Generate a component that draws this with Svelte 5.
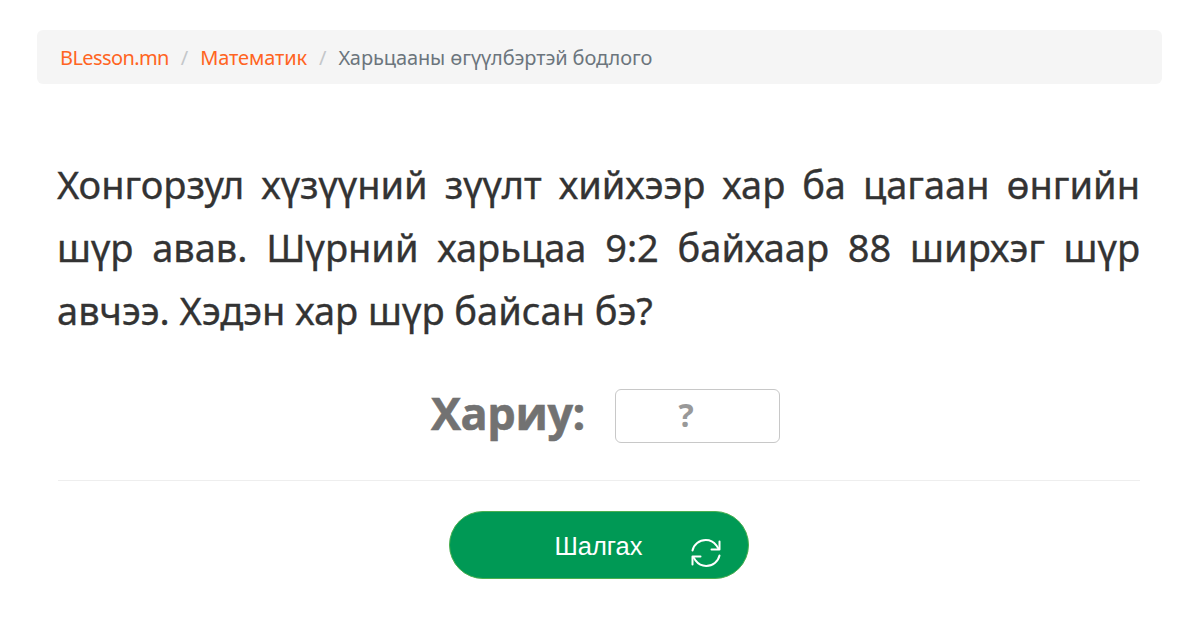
<script>
  let crumbs = [
    { label: "BLesson.mn", link: true, home: true },
    { label: "Математик", link: true },
    { label: "Харьцааны өгүүлбэртэй бодлого", link: false }
  ];
  let answer = "";
</script>

<div class="page">
  <nav class="breadcrumb">
    {#each crumbs as crumb, i}
      {#if i > 0}<span class="sep">/</span>{/if}
      <span class:link={crumb.link} class:home={crumb.home}>{crumb.label}</span>
    {/each}
  </nav>

  <div class="problem">
    <p class="question">
      Хонгорзул хүзүүний зүүлт хийхээр хар ба цагаан өнгийн шүр авав. Шүрний харьцаа 9:2 байхаар 88 ширхэг шүр авчээ. Хэдэн хар шүр байсан бэ?
    </p>

    <div class="answer">
      <span class="answer-label">Хариу:</span>
      <input class="answer-input" placeholder="?" bind:value={answer} />
    </div>

    <hr />

    <div class="actions">
      <button class="check">
        <span class="check-label">Шалгах</span>
        <svg class="refresh" width="32" height="32" viewBox="0 0 32 32" fill="none" stroke="#fff" stroke-width="2" stroke-linecap="round" stroke-linejoin="round">
          <path d="M2.500 13.500C3.800 7.500 9.200 3 15.800 3c4.300 0 8 1.900 10.500 5.300l2.400 3.700" />
          <path d="M29.500 4.500v8h-8" />
          <path d="M29.500 18.500c-1.300 6-6.700 10.500-13.300 10.500-4.300 0-8-1.900-10.500-5.300L3.300 20" />
          <path d="M2.500 27.500v-8h8" />
        </svg>
      </button>
    </div>
  </div>
</div>

<style>
  :global(body) {
    background: #fff;
  }
  .page {
    width: 1125px;
    margin: 0 0 0 37px;
    padding-top: 30px;
    font-family: "Noto Sans", "Open Sans", sans-serif;
  }
  .breadcrumb {
    display: flex;
    align-items: center;
    height: 54px;
    box-sizing: border-box;
    padding: 0 23px;
    background: #f5f5f5;
    border-radius: 6px;
    font-size: 20px;
    letter-spacing: -0.1px;
    color: #6c757d;
  }
  .link {
    color: #ff6422;
  }
  .home {
    letter-spacing: -0.6px;
  }
  .sep {
    padding: 0 12px;
    color: #c4c7ca;
  }
  .problem {
    padding: 0 22px 0 21px;
  }
  .question {
    margin: 69px 0 0 -1px;
    font-size: 38px;
    line-height: 63px;
    -webkit-text-stroke: 0.35px #333;
    color: #333;
    text-align: justify;
  }
  .answer {
    display: flex;
    justify-content: center;
    align-items: center;
    gap: 30px;
    margin-top: 47px;
    padding-left: 13px;
  }
  .answer-label {
    font-family: "Open Sans", sans-serif;
    font-size: 45px;
    font-weight: 700;
    line-height: 44px;
    letter-spacing: -0.4px;
    margin-bottom: 6px;
    -webkit-text-stroke: 0.6px #727272;
    color: #727272;
  }
  .answer-input {
    width: 165px;
    height: 54px;
    box-sizing: border-box;
    padding: 0 23px 3px 0;
    border: 1px solid #c8c8c8;
    border-radius: 6px;
    background: #fff;
    font-family: "Open Sans", sans-serif;
    font-size: 32px;
    font-weight: 700;
    text-align: center;
  }
  .answer-input::placeholder {
    color: #999;
    opacity: 1;
  }
  hr {
    margin: 37px 0 0;
    border: 0;
    border-top: 1px solid #eee;
  }
  .actions {
    display: flex;
    justify-content: center;
    margin-top: 30px;
  }
  .check {
    position: relative;
    width: 300px;
    height: 68px;
    padding: 3px 1px 0 0;
    border: 1px solid #4caf50;
    border-radius: 34px;
    background: #009955;
    color: #fff;
    font-family: "Liberation Sans", sans-serif;
    font-size: 25.500px;
  }
  .refresh {
    position: absolute;
    right: 26px;
    top: 25px;
  }
</style>
